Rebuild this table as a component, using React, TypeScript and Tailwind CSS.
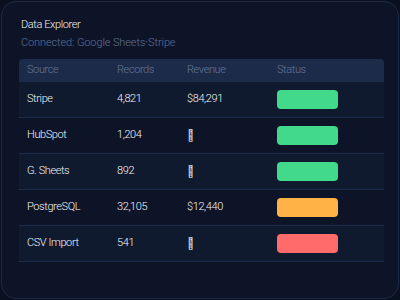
const rows = [
  { source: "Stripe", records: "4,821", revenue: "$84,291", status: "bg-[#42d98b]", alt: true },
  { source: "HubSpot", records: "1,204", revenue: null, status: "bg-[#42d98b]", alt: false },
  { source: "G. Sheets", records: "892", revenue: null, status: "bg-[#42d98b]", alt: true },
  { source: "PostgreSQL", records: "32,105", revenue: "$12,440", status: "bg-[#ffb347]", alt: false },
  { source: "CSV Import", records: "541", revenue: null, status: "bg-[#ff6b6b]", alt: true },
];

export default function App() {
  return (
    <div className="w-[400px] h-[300px] bg-[#0b1020] p-[1px] font-['Roboto'] font-light tracking-tight">
      <div className="h-full rounded-[15px] border border-[#1c2a45] bg-[#0e1428] pl-[17px] pt-[15px]">
        <div className="pl-[2px] text-[11px] leading-[16px] text-[#eef1f6]">Data Explorer</div>
        <div className="pl-[2px] mt-[2px] text-[11px] leading-[16px] tracking-[-0.01em] text-[#5f7196]">
          Connected: Google Sheets<span className="font-normal">·</span>Stripe
        </div>
        <div className="mt-[8px] w-[365px]">
          <div className="flex h-[23px] items-center rounded-t-[4px] bg-[#1c2b49] text-[11px] text-[#66779a]">
            <div className="w-[98px] pl-[8px]">Source</div>
            <div className="w-[70px]">Records</div>
            <div className="w-[90px]">Revenue</div>
            <div>Status</div>
          </div>
          {rows.map((r) => (
            <div
              key={r.source}
              className={`flex h-[36px] items-center border-b border-[#1c2b49] text-[11px] text-[#f3f5f9] ${
                r.alt ? "bg-[#101a2e]" : "bg-[#0e1428]"
              }`}
            >
              <div className="w-[98px] pl-[8px]">{r.source}</div>
              <div className="w-[70px]">{r.records}</div>
              <div className="w-[90px]">
                {r.revenue ?? <span className="font-['Inter'] text-[#c8cfdc]">{"\uFFFF"}</span>}
              </div>
              <div className={`h-[19px] w-[61px] rounded-[4px] ${r.status}`} />
            </div>
          ))}
        </div>
      </div>
    </div>
  );
}
